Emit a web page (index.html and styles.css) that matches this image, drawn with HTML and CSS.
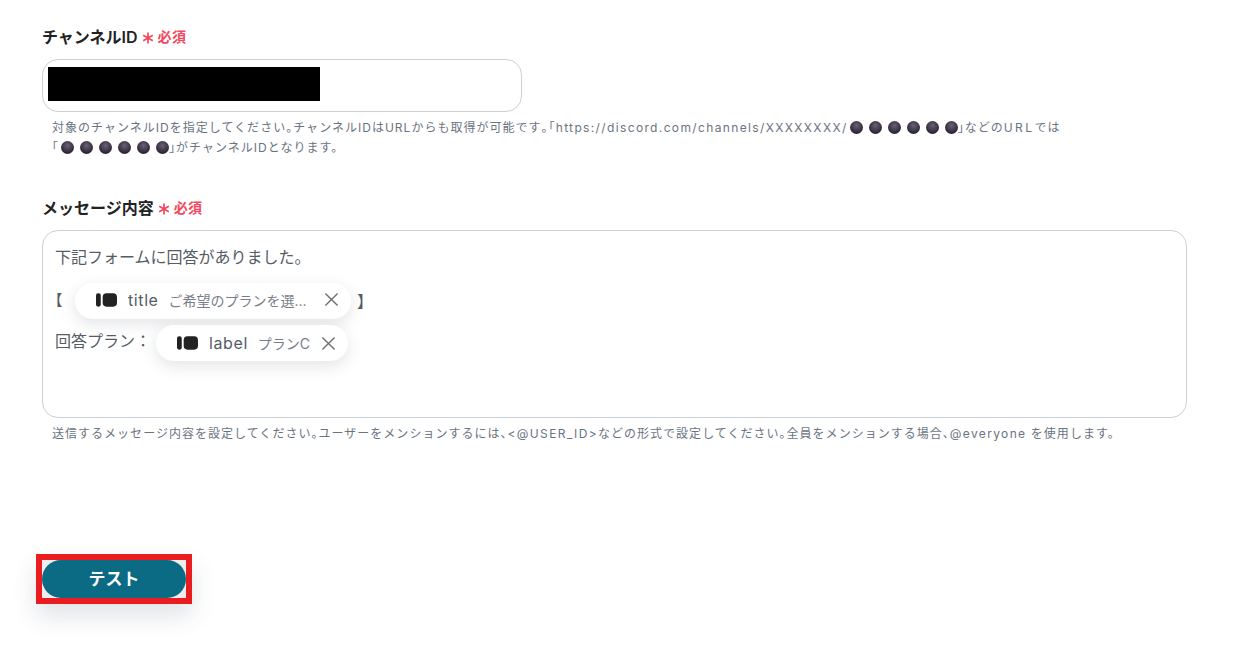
FILE: index.html
```html
<!DOCTYPE html>
<html lang="ja">
<head>
<meta charset="utf-8">
<title>Discord</title>
<link rel="stylesheet" href="styles.css">
</head>
<body>
<main class="form">
  <section class="field field-id">
    <div class="label">チャンネルID <span class="req"><svg class="star" viewBox="0 0 12 12"><path d="M6 .5v11M1.2 3.2l9.6 5.6M10.8 3.2 1.2 8.8"/></svg>必須</span></div>
    <div class="input"><div class="mask"></div></div>
    <p class="help">対象のチャンネルIDを指定してください<span class="p">。</span>チャンネルIDはURLからも取得が可能です<span class="p">。</span>「<span class="lat">https://discord.com/channels/XXXXXXXX/</span><span class="dots"><i></i><i></i><i></i><i></i><i></i><i></i></span><span class="p">」</span>などの<span class="lat-wide">URL</span>では<br><span class="p">「</span><span class="dots"><i></i><i></i><i></i><i></i><i></i><i></i></span><span class="p">」</span>がチャンネルIDとなります。</p>
  </section>
  <section class="field field-msg">
    <div class="label">メッセージ内容 <span class="req"><svg class="star" viewBox="0 0 12 12"><path d="M6 .5v11M1.2 3.2l9.6 5.6M10.8 3.2 1.2 8.8"/></svg>必須</span></div>
    <div class="textarea">
      <div class="line line-a">下記フォームに回答がありました。</div>
      <div class="line line-b">
        <span class="br-l">【</span>
        <span class="chip chip-title">
          <svg class="logo" viewBox="0 0 22 16"><rect x="0" y="1" width="5" height="14" rx="2.2"/><rect x="7" y="1" width="15" height="14" rx="4"/></svg>
          <span class="name">title</span><span class="val">ご希望のプランを選...</span>
          <svg class="x" viewBox="0 0 16 16"><path d="M1.5 1.5 14.5 14.5M14.5 1.5 1.5 14.5"/></svg>
        </span>
        <span class="br-r">】</span>
      </div>
      <div class="line line-c">
        <span class="plan">回答プラン：</span>
        <span class="chip chip-label">
          <svg class="logo" viewBox="0 0 22 16"><rect x="0" y="1" width="5" height="14" rx="2.2"/><rect x="7" y="1" width="15" height="14" rx="4"/></svg>
          <span class="name">label</span><span class="val">プランC</span>
          <svg class="x" viewBox="0 0 16 16"><path d="M1.5 1.5 14.5 14.5M14.5 1.5 1.5 14.5"/></svg>
        </span>
      </div>
    </div>
    <p class="help">送信するメッセージ内容を設定してください<span class="p">。</span>ユーザーをメンションするには<span class="p">、</span><span class="lat">&lt;@USER_ID&gt;</span>などの形式で設定してください<span class="p">。</span>全員をメンションする場合<span class="p">、</span><span class="lat">@everyone</span> を使用します。</p>
  </section>
  <div class="btn-frame"><button class="btn">テスト</button></div>
</main>
</body>
</html>
```
FILE: styles.css
```css
* { box-sizing: border-box; }
html, body { margin: 0; background: #fff; }
body {
  height: 661px;
  overflow: hidden;
  font-family: Inter, "Noto Sans CJK JP", sans-serif;
  color: #222;
}
.form { padding: 25px 0 0 42px; }
.field-msg { margin-top: 38px; }
.label {
  display: flex;
  align-items: center;
  gap: 4px;
  height: 24px;
  font-size: 16px;
  font-weight: 600;
  line-height: 24px;
  color: #222;
}
.req { display: flex; align-items: center; color: #f2495e; font-size: 14px; font-weight: 600; letter-spacing: .4px; }
.star { width: 12px; height: 12px; margin-right: 4px; margin-top: 2px; fill: none; stroke: #f2495e; stroke-width: 1.7; flex: none; }
.input {
  width: 480px;
  height: 53px;
  margin-top: 10px;
  padding: 7px 5px;
  border: 1px solid #ccd0d8;
  border-radius: 16px;
  background: #fff;
}
.mask { width: 272px; height: 34px; background: #000; }
.help {
  margin: 6px 0 0 10px;
  font-size: 12px;
  letter-spacing: 1.02px;
  line-height: 20px;
  color: #6a747f;
  white-space: nowrap;
}
.p { font-feature-settings: "halt"; }
.lat { letter-spacing: 1.36px; }
.lat-wide { letter-spacing: 2.4px; }
.dots { display: inline-flex; gap: 6px; vertical-align: -2px; margin-left: 2px; }
.dots i {
  display: block;
  width: 13px;
  height: 13px;
  border-radius: 50%;
  background: radial-gradient(circle at 50% 35%, #6a6274, #2c2536 70%);
}
.textarea {
  width: 1145px;
  height: 188px;
  margin-top: 10px;
  padding: 13px 12px;
  border: 1px solid #ccd0d8;
  border-radius: 16px;
  background: #fff;
  font-size: 16px;
  color: #555c66;
}
.line { display: flex; align-items: center; }
.line-a { height: 24px; }
.line-b { margin-top: 14px; height: 37px; }
.line-c { margin-top: 6px; height: 36px; }
.br-l { width: 20px; flex: none; font-size: 15px; font-feature-settings: "halt"; margin-top: -2px; }
.br-r { margin-left: 6px; margin-top: -2px; font-feature-settings: "halt"; }
.plan { margin-top: -6px; width: 91px; flex: none; white-space: nowrap; }
.chip {
  display: inline-flex;
  align-items: center;
  height: 36px;
  border-radius: 18px;
  background: #fff;
  box-shadow: 0 5px 16px rgba(40, 50, 70, .13);
}
.chip-title { width: 276px; padding-left: 21px; padding-bottom: 2px; }
.chip-label { width: 192px; padding-left: 21px; margin-left: 10px; }
.logo { width: 21px; height: 16px; fill: #222; flex: none; }
.name { margin-left: 11px; font-size: 16px; letter-spacing: .6px; color: #555c66; }
.val { margin-left: 10px; font-size: 14px; color: #777e88; white-space: nowrap; }
.x { width: 15px; height: 15px; margin-left: auto; margin-right: 12px; fill: none; stroke: #6f6f6f; stroke-width: 1.5; flex: none; }
.btn-frame {
  width: 156px;
  height: 50px;
  margin: 110px 0 0 -6px;
  border: 6px solid #eb1c1f;
  background: #eee;
  box-shadow: 0 12px 24px rgba(40, 60, 80, .14);
}
.btn {
  display: block;
  width: 144px;
  height: 38px;
  border: 0;
  border-radius: 19px;
  background: #0b6a84;
  color: #fff;
  font-family: inherit;
  font-size: 17px;
  font-weight: 700;
  padding: 0 0 3px;
}
```
